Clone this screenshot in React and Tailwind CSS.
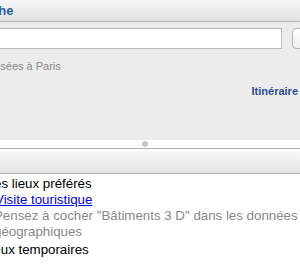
export default function App() {
  return (
    <div className="w-[300px] h-[273px] overflow-hidden bg-white font-['Liberation_Sans',Arial,sans-serif]">
      {/* title bar */}
      <div className="h-[22px] border-b border-[#b3b3b3] bg-gradient-to-b from-[#f7f7f7] to-[#e1e1e1] flex items-center">
        <span className="ml-[-53px] text-[13px] font-bold text-[#2c5aa6] leading-none">Recherche</span>
      </div>

      {/* search panel */}
      <div className="h-[118px] bg-[#ececec] pt-[6px]">
        <div className="flex items-center ml-[-20px] gap-[10px]">
          <input
            className="h-[21px] w-[302px] shrink-0 bg-white border border-[#bdbdbd] outline-none px-1 text-[12px]"
            readOnly
          />
          <button className="h-[21px] w-[40px] shrink-0 rounded-[4px] border border-[#b5b5b5] bg-gradient-to-b from-white to-[#eeeeee]" />
        </div>
        <div className="mt-[10px] ml-[-15px] text-[11px] leading-[14px] text-[#8a8a8a]">Musées à Paris</div>
        <div className="mt-[11px] pr-[2px] text-right text-[11px] leading-[14px] font-bold text-[#2f4f8e]">Itinéraire</div>
      </div>

      {/* splitter */}
      <div className="h-[9px] bg-white border-b border-[#b0b0b0] flex items-center justify-center pr-[10px]">
        <div className="w-[6px] h-[6px] rounded-full bg-[#c6c6c6]" />
      </div>

      {/* toolbar */}
      <div className="h-[25px] border-b border-[#b0b0b0] bg-gradient-to-b from-[#fbfbfb] to-[#e4e4e4]" />

      {/* list */}
      <div className="pt-[2px] text-[13.3px] leading-[16px]">
        <div className="ml-[-17px] text-black">Mes lieux préférés</div>
        <div className="ml-[-5px]">
          <a href="#" className="text-[#0000ee] underline">Visite touristique</a>
        </div>
        <div className="ml-[-6px] text-[#888888]">
          Pensez à cocher "Bâtiments 3 D" dans les données géographiques
        </div>
        <div className="mt-[2px] ml-[-17px] text-black">Lieux temporaires</div>
      </div>
    </div>
  );
}
